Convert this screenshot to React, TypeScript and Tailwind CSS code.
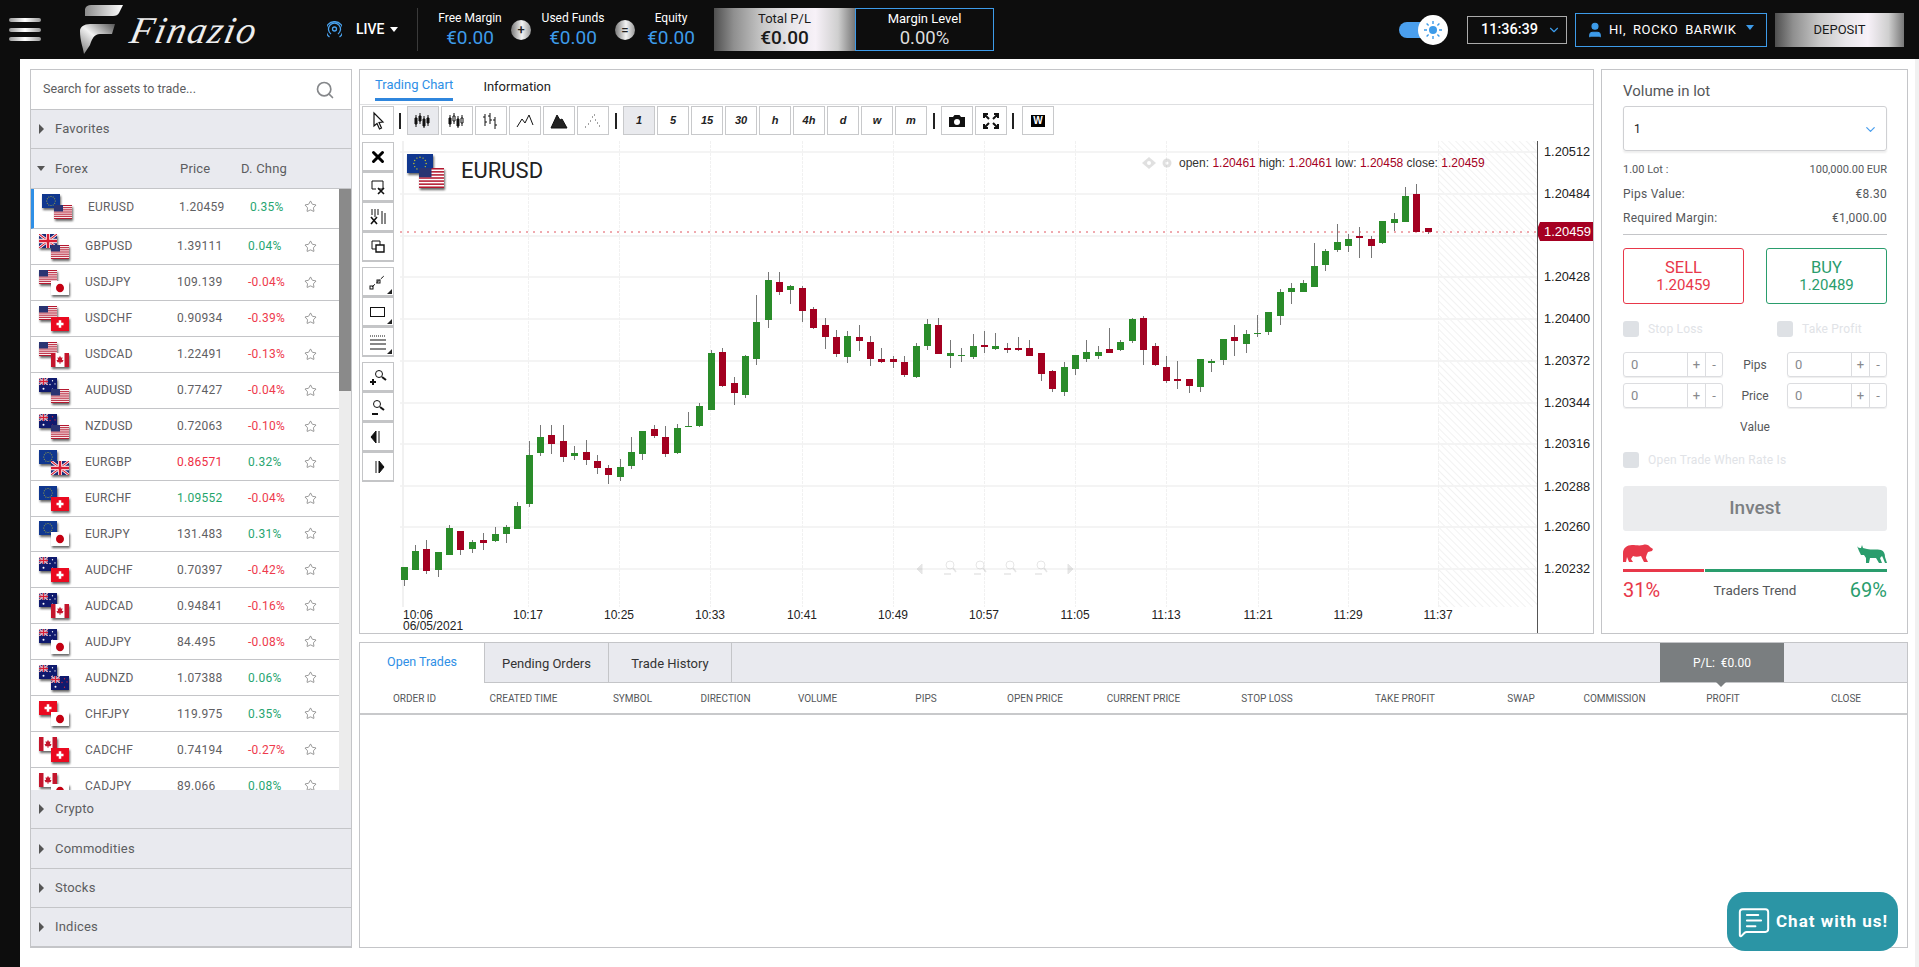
import { ChevronDown, MessageSquareText, Search, Star, User, X } from 'lucide-react'
import type { ReactNode } from 'react'

const metal =
  'bg-[linear-gradient(90deg,#4f4f4f_0%,#8f8f8f_14%,#c9c9c9_35%,#e8e6ea_55%,#f7f1f8_72%,#cfcfcf_88%,#777777_100%)]'

const pairs = [
  ['EUR', 'USD', '1.20459', '0.35%', ''],
  ['GBP', 'USD', '1.39111', '0.04%', ''],
  ['USD', 'JPY', '109.139', '-0.04%', ''],
  ['USD', 'CHF', '0.90934', '-0.39%', ''],
  ['USD', 'CAD', '1.22491', '-0.13%', ''],
  ['AUD', 'USD', '0.77427', '-0.04%', ''],
  ['NZD', 'USD', '0.72063', '-0.10%', ''],
  ['EUR', 'GBP', '0.86571', '0.32%', 'down'],
  ['EUR', 'CHF', '1.09552', '-0.04%', 'up'],
  ['EUR', 'JPY', '131.483', '0.31%', ''],
  ['AUD', 'CHF', '0.70397', '-0.42%', ''],
  ['AUD', 'CAD', '0.94841', '-0.16%', ''],
  ['AUD', 'JPY', '84.495', '-0.08%', ''],
  ['AUD', 'NZD', '1.07388', '0.06%', ''],
  ['CHF', 'JPY', '119.975', '0.35%', ''],
  ['CAD', 'CHF', '0.74194', '-0.27%', ''],
  ['CAD', 'JPY', '89.066', '0.08%', ''],
]

// bodyTop, bodyBottom, wickTop, wickBottom, 1 = green
const candles = [
  [567, 580, 567, 586, 1], [551, 570, 545, 570, 1], [549, 571, 540, 574, 0], [552, 570, 552, 577, 1],
  [528, 555, 525, 555, 1], [531, 550, 531, 555, 0], [542, 549, 540, 553, 1], [540, 543, 533, 550, 0],
  [534, 541, 527, 542, 1], [527, 534, 525, 543, 1], [506, 529, 502, 529, 1], [455, 504, 441, 507, 1],
  [437, 453, 425, 456, 1], [435, 444, 425, 454, 0], [441, 457, 425, 462, 0], [453, 456, 446, 460, 1],
  [452, 460, 440, 465, 0], [461, 468, 455, 474, 0], [468, 475, 465, 484, 0], [467, 477, 459, 481, 1],
  [452, 466, 437, 469, 1], [431, 454, 431, 460, 1], [429, 436, 425, 438, 0], [437, 454, 426, 457, 0],
  [428, 453, 424, 454, 1], [426, 427, 412, 427, 1], [406, 426, 403, 427, 1], [353, 410, 350, 410, 1],
  [352, 386, 348, 387, 0], [383, 393, 377, 405, 0], [356, 395, 355, 398, 1], [322, 359, 295, 365, 1],
  [280, 320, 272, 328, 1], [282, 292, 272, 295, 0], [286, 290, 285, 304, 1], [288, 311, 286, 322, 0],
  [309, 328, 307, 329, 0], [325, 337, 318, 349, 0], [337, 354, 330, 357, 0], [336, 357, 331, 363, 1],
  [337, 341, 325, 351, 0], [342, 359, 336, 366, 0], [359, 362, 348, 363, 0], [359, 362, 356, 368, 0],
  [362, 375, 356, 377, 0], [346, 377, 343, 378, 1], [324, 346, 319, 350, 1], [325, 354, 318, 354, 0],
  [353, 356, 340, 368, 1], [355, 356, 348, 362, 1], [346, 357, 334, 359, 1], [345, 347, 331, 353, 0],
  [346, 349, 333, 350, 1], [348, 350, 343, 353, 0], [348, 350, 337, 351, 0], [348, 356, 340, 356, 0],
  [353, 374, 353, 381, 0], [371, 389, 370, 392, 0], [367, 392, 362, 396, 1], [355, 369, 355, 375, 1],
  [352, 359, 340, 362, 1], [352, 356, 346, 359, 1], [349, 353, 328, 353, 0], [342, 350, 340, 351, 1],
  [319, 341, 318, 343, 1], [318, 350, 316, 365, 0], [346, 365, 343, 366, 0], [367, 381, 356, 383, 0],
  [379, 381, 361, 389, 0], [379, 386, 379, 393, 0], [359, 387, 359, 392, 1], [361, 363, 359, 372, 1],
  [339, 360, 339, 365, 1], [337, 341, 325, 356, 0], [334, 344, 330, 353, 1], [333, 334, 315, 337, 1],
  [312, 332, 312, 335, 1], [292, 316, 289, 325, 1], [288, 292, 283, 304, 1], [283, 292, 280, 292, 1],
  [266, 287, 243, 287, 1], [251, 265, 249, 271, 1], [242, 250, 224, 252, 1], [239, 246, 234, 252, 1],
  [236, 238, 227, 258, 0], [239, 246, 236, 258, 0], [221, 243, 221, 244, 1], [219, 223, 213, 231, 1],
  [196, 222, 187, 222, 1], [194, 232, 184, 232, 0], [228, 232, 228, 234, 0],
]

const gridY = [152, 194, 236, 277, 319, 361, 403, 444, 486, 527, 569]
const gridX = [528, 619, 710, 802, 893, 984, 1075, 1166, 1258, 1348, 1438]
const timeLabels = ['10:17', '10:25', '10:33', '10:41', '10:49', '10:57', '11:05', '11:13', '11:21', '11:29', '11:37']
const priceLabels = [
  ['1.20512', 156], ['1.20484', 198], ['1.20428', 281], ['1.20400', 323], ['1.20372', 365],
  ['1.20344', 407], ['1.20316', 448], ['1.20288', 491], ['1.20260', 531], ['1.20232', 573],
] as const

const columns = [
  'ORDER ID', 'CREATED TIME', 'SYMBOL', 'DIRECTION', 'VOLUME', 'PIPS', 'OPEN PRICE', 'CURRENT PRICE',
  'STOP LOSS', 'TAKE PROFIT', 'SWAP', 'COMMISSION', 'PROFIT', 'CLOSE',
]

function UnionJack({ x = 0, y = 0, w = 36, h = 26 }: { x?: number; y?: number; w?: number; h?: number }) {
  return (
    <svg x={x} y={y} width={w} height={h} viewBox="0 0 36 26" preserveAspectRatio="none">
      <rect width="36" height="26" fill="#1c2a78" />
      <path d="M0 0L36 26M36 0L0 26" stroke="#fff" strokeWidth="5" />
      <path d="M0 0L36 26M36 0L0 26" stroke="#d81e34" strokeWidth="2" />
      <path d="M18 0V26M0 13H36" stroke="#fff" strokeWidth="8" />
      <path d="M18 0V26M0 13H36" stroke="#d81e34" strokeWidth="5" />
    </svg>
  )
}

function FlagArt({ code }: { code: string }) {
  if (code === 'USD') {
    return (
      <>
        <rect width="36" height="26" fill="#fff" />
        {[0, 4, 8, 12, 16, 20, 24].map((y) => (
          <rect key={y} y={y} width="36" height="2" fill="#b4182f" />
        ))}
        <rect width="18" height="12" fill="#2a3472" />
      </>
    )
  }
  if (code === 'EUR') {
    return (
      <>
        <rect width="36" height="26" fill="#10378f" />
        {[0, 30, 60, 90, 120, 150, 180, 210, 240, 270, 300, 330].map((a) => (
          <circle
            key={a}
            cx={18 + 8.5 * Math.cos((a * Math.PI) / 180)}
            cy={13 + 8.5 * Math.sin((a * Math.PI) / 180)}
            r="1"
            fill="#c5c22a"
          />
        ))}
      </>
    )
  }
  if (code === 'GBP') return <UnionJack />
  if (code === 'JPY') {
    return (
      <>
        <rect width="36" height="26" fill="#fff" />
        <circle cx="18" cy="13" r="8" fill="#c40012" />
      </>
    )
  }
  if (code === 'CHF') {
    return (
      <>
        <rect width="36" height="26" fill="#ea0a20" />
        <path d="M18 6V20M11 13H25" stroke="#fff" strokeWidth="5" />
      </>
    )
  }
  if (code === 'CAD') {
    return (
      <>
        <rect width="36" height="26" fill="#fff" />
        <rect width="9" height="26" fill="#c4152c" />
        <rect x="27" width="9" height="26" fill="#c4152c" />
        <path d="M18 5L20 9L23 8L22 13L25 13L23 17L19 17V20H17V17L13 17L11 13L14 13L13 8L16 9Z" fill="#c4152c" />
      </>
    )
  }
  const star = code === 'NZD' ? '#d8243a' : '#fff'
  return (
    <>
      <rect width="36" height="26" fill="#0f1a6e" />
      <UnionJack w={18} h={13} />
      <circle cx="9" cy="20" r="2" fill="#fff" />
      <circle cx="27" cy="5" r="1.3" fill={star} />
      <circle cx="22" cy="12" r="1.3" fill={star} />
      <circle cx="32" cy="11" r="1.3" fill={star} />
      <circle cx="27" cy="21" r="1.3" fill={star} />
    </>
  )
}

function Flag({ code, className }: { code: string; className: string }) {
  return (
    <svg viewBox="0 0 36 26" preserveAspectRatio="none" className={`absolute drop-shadow-[1px_2px_1px_rgba(0,0,0,0.6)] ${className}`}>
      <FlagArt code={code} />
    </svg>
  )
}

function SectionHead({ label, open, children }: { label: string; open?: boolean; children?: ReactNode }) {
  return (
    <div className={`flex items-center border-b border-[#c4c5c8] bg-[#e9eaef] text-[13px] tracking-[0.2px] text-[#5c5d60] ${open ? 'h-[40px]' : 'h-[39px]'}`}>
      <div className="flex w-[24px] justify-end pr-[10px]">
        {open ? (
          <span className="h-0 w-0 border-x-[4px] border-t-[5px] border-x-transparent border-t-[#555]" />
        ) : (
          <span className="mr-[1px] h-0 w-0 border-y-[5px] border-l-[5px] border-y-transparent border-l-[#555]" />
        )}
      </div>
      <span className="w-[125px]">{label}</span>
      {children}
    </div>
  )
}

function PairRow({ row, first }: { row: string[]; first: boolean }) {
  const [base, quote, price, change, tick] = row
  const priceColor = tick === 'down' ? 'text-[#ee2f45]' : tick === 'up' ? 'text-[#1fa56c]' : 'text-[#5f6063]'
  const changeColor = change.startsWith('-') ? 'text-[#ee3a4c]' : 'text-[#27a571]'
  return (
    <div className={`flex shrink-0 items-center border-b border-[#c4c5c8] text-[12px] tracking-[0.25px] ${first ? 'h-[40px] border-l-[3px] border-l-[#2f8fe6] pb-[4px]' : 'h-[35.94px]'}`}>
      <div className="w-[54px] shrink-0 pl-[8px]">
        <div className="relative h-[25px] w-[30px]">
          <Flag code={base} className="left-0 top-0 h-[14px] w-[18px]" />
          <Flag code={quote} className="bottom-0 right-0 h-[14px] w-[18px]" />
        </div>
      </div>
      <span className={`shrink-0 text-[#5f6063] ${first ? 'w-[91px]' : 'w-[92px]'}`}>{base}{quote}</span>
      <span className={`w-[71px] shrink-0 ${priceColor}`}>{price}</span>
      <span className={`shrink-0 ${changeColor} ${first ? 'w-[54px]' : 'w-[56px]'}`}>{change}</span>
      <Star size={13} strokeWidth={1.1} className="text-[#555]" />
    </div>
  )
}

function MarketsPanel() {
  return (
    <section className="row-span-2 flex flex-col border border-[#c4c5c8] bg-white">
      <div className="flex h-[40px] items-center justify-between border-b border-[#c4c5c8] pl-[12px] pr-[16px] text-[12.5px] text-[#5c5d60]">
        <span>Search for assets to trade...</span>
        <Search size={20} strokeWidth={2} className="text-[#85878a]" />
      </div>
      <SectionHead label="Favorites" />
      <SectionHead label="Forex" open>
        <span className="w-[61px]">Price</span>
        <span>D. Chng</span>
      </SectionHead>
      <div className="relative h-[601px] overflow-hidden">
        <div className="flex w-[308px] flex-col">
          {pairs.map((row, i) => (
            <PairRow key={row[0] + row[1]} row={row} first={i === 0} />
          ))}
        </div>
        <div className="absolute inset-y-0 right-0 w-[12px] bg-[#ececec]">
          <div className="h-[202px] bg-[#8a8a8a]" />
        </div>
      </div>
      <SectionHead label="Crypto" />
      <div className="[&>div]:h-[40px]">
        <SectionHead label="Commodities" />
      </div>
      <SectionHead label="Stocks" />
      <SectionHead label="Indices" />
    </section>
  )
}

function ToolSvg({ children }: { children: ReactNode }) {
  return (
    <svg width="22" height="20" viewBox="0 0 22 20" fill="none" stroke="#111" strokeWidth="1">
      {children}
    </svg>
  )
}

const barIcon = (
  <ToolSvg>
    <path d="M4 4V16M8 2V13M12 5V17M16 4V15" />
    <path d="M3 7H5V13H3ZM7 5H9V10H7ZM11 8H13V15H11ZM15 7H17V12H15Z" fill="#111" />
  </ToolSvg>
)
const barHollowIcon = (
  <ToolSvg>
    <path d="M4 4V16M8 2V13M12 5V17M16 4V15" />
    <path d="M3 7H5V13H3ZM11 8H13V15H11Z" fill="#111" />
    <path d="M7 5H9V10H7ZM15 7H17V12H15Z" fill="#fff" />
  </ToolSvg>
)
const ohlcIcon = (
  <ToolSvg>
    <path d="M5 3V15M3 6H5M5 11H7M10 2V13M8 5H10M10 9H12M15 6V18M13 9H15M15 14H17" />
  </ToolSvg>
)
const lineIcon = (
  <ToolSvg>
    <path d="M3 16L8 8L11 12L15 4L19 14" />
  </ToolSvg>
)
const areaIcon = (
  <ToolSvg>
    <path d="M3 17L9 4L12 9L14 8L19 17Z" fill="#222" />
  </ToolSvg>
)
const dotsIcon = (
  <ToolSvg>
    <path d="M3 16h1M6 13h1M8 10h1M10 6h1M13 9h1M15 12h1M17 15h1M12 4h1" stroke="#444" />
  </ToolSvg>
)
const cursorIcon = (
  <svg width="18" height="20" viewBox="0 0 18 20" fill="#fff" stroke="#111" strokeWidth="1.2">
    <path d="M5 2L5 15L8 12.5L10.5 18L12.5 17L10 11.5L14 11Z" />
  </svg>
)
const cameraIcon = (
  <svg width="20" height="18" viewBox="0 0 20 18" fill="#111">
    <path d="M2 5H6L7.5 3H12.5L14 5H18V15H2Z" />
    <circle cx="10" cy="10" r="3" fill="#fff" />
  </svg>
)
const fullIcon = (
  <svg width="18" height="18" viewBox="0 0 18 18" fill="none" stroke="#111" strokeWidth="2">
    <path d="M2 6V2H6M12 2H16V6M16 12V16H12M6 16H2V12M3 3L7 7M15 3L11 7M15 15L11 11M3 15L7 11" />
  </svg>
)

function ToolBtn({ children, active, className = '' }: { children: ReactNode; active?: boolean; className?: string }) {
  return (
    <div className={`flex h-[29px] w-[32px] shrink-0 items-center justify-center border border-[#c8c9cb] ${active ? 'bg-[#e9eaee]' : 'bg-white'} ${className}`}>
      {children}
    </div>
  )
}

function TimeBtn({ label, active }: { label: string; active?: boolean }) {
  return (
    <ToolBtn active={active}>
      <span className="font-['Liberation_Sans',sans-serif] text-[11px] font-bold italic text-[#222]">{label}</span>
    </ToolBtn>
  )
}

function Sep({ className }: { className: string }) {
  return <span className={`h-[16px] w-[2px] shrink-0 bg-[#222] ${className}`} />
}

function TopToolbar() {
  return (
    <div className="mt-[1px] flex h-[29px] items-center gap-[2px] pl-[2px]">
      <ToolBtn>{cursorIcon}</ToolBtn>
      <Sep className="ml-[3px] mr-[4px]" />
      <ToolBtn active>{barIcon}</ToolBtn>
      <ToolBtn>{barHollowIcon}</ToolBtn>
      <ToolBtn>{ohlcIcon}</ToolBtn>
      <ToolBtn>{lineIcon}</ToolBtn>
      <ToolBtn>{areaIcon}</ToolBtn>
      <ToolBtn>{dotsIcon}</ToolBtn>
      <Sep className="mx-[4px]" />
      <TimeBtn label="1" active />
      {['5', '15', '30', 'h', '4h', 'd', 'w', 'm'].map((t) => (
        <TimeBtn key={t} label={t} />
      ))}
      <Sep className="mx-[4px]" />
      <ToolBtn>{cameraIcon}</ToolBtn>
      <ToolBtn>{fullIcon}</ToolBtn>
      <Sep className="ml-[3px] mr-[6px]" />
      <ToolBtn>
        <span className="bg-black px-[2px] font-['Liberation_Sans',sans-serif] text-[10px] font-bold leading-[12px] text-white">W</span>
      </ToolBtn>
    </div>
  )
}

function SideBtn({ children, corner }: { children: ReactNode; corner?: boolean }) {
  return (
    <div className="relative flex h-[30px] w-[32px] items-center justify-center border border-b-2 border-[#c4c5c7] bg-white">
      {children}
      {corner && (
        <span className="absolute bottom-[1px] right-[1px] h-0 w-0 border-b-[5px] border-l-[5px] border-b-[#222] border-l-transparent" />
      )}
    </div>
  )
}

function SideToolbar() {
  return (
    <div className="flex w-[40px] shrink-0 flex-col pl-[2px] pt-[1px]">
      <SideBtn>
        <X size={18} strokeWidth={4} className="text-black" />
      </SideBtn>
      <SideBtn>
        <ToolSvg>
          <path d="M5 4H16V12H11M5 4V12H9" />
          <path d="M11 11L17 17M17 11L11 17" strokeWidth="1.6" />
        </ToolSvg>
      </SideBtn>
      <SideBtn>
        <ToolSvg>
          <path d="M5 2V8M8 2V10M11 2V8M15 4V17M18 6V17" />
          <path d="M4 10L10 17M10 10L4 17" strokeWidth="1.6" />
        </ToolSvg>
      </SideBtn>
      <SideBtn>
        <ToolSvg>
          <path d="M5 4H13V8M5 4V12H9" />
          <path d="M9 8H17V15H9Z" strokeWidth="1.4" />
        </ToolSvg>
      </SideBtn>
      <div className="h-[5px]" />
      <SideBtn corner>
        <ToolSvg>
          <path d="M5 15L18 3" strokeDasharray="4 2" />
          <rect x="3" y="14" width="3" height="3" />
          <rect x="10" y="8" width="3" height="3" />
        </ToolSvg>
      </SideBtn>
      <SideBtn corner>
        <ToolSvg>
          <rect x="3.5" y="5.5" width="14" height="9" />
        </ToolSvg>
      </SideBtn>
      <SideBtn corner>
        <ToolSvg>
          <path d="M3 4H19" strokeDasharray="1 1" />
          <path d="M3 8H19M3 12H19M3 17H19" />
        </ToolSvg>
      </SideBtn>
      <div className="h-[5px]" />
      <SideBtn>
        <ToolSvg>
          <circle cx="12" cy="7" r="3.5" />
          <path d="M15 10L19 13" strokeWidth="2" />
          <path d="M6 12V18M3 15H9" strokeWidth="2" />
        </ToolSvg>
      </SideBtn>
      <SideBtn>
        <ToolSvg>
          <circle cx="10" cy="7" r="3.5" />
          <path d="M13 10L17 13" strokeWidth="2" />
          <path d="M5 17H11" strokeWidth="2" />
        </ToolSvg>
      </SideBtn>
      <SideBtn>
        <ToolSvg>
          <path d="M9 4V16L4 10Z" fill="#111" />
          <path d="M12 4V16" />
        </ToolSvg>
      </SideBtn>
      <SideBtn>
        <ToolSvg>
          <path d="M12 4V16L17 10Z" fill="#111" />
          <path d="M9 4V16" />
        </ToolSvg>
      </SideBtn>
    </div>
  )
}

function ChartCanvas() {
  const red = '#a50022'
  return (
    <svg viewBox="400 141 1193 492" className="h-[492px] w-[1193px] shrink-0 font-['Liberation_Sans',sans-serif]">
      <defs>
        <pattern id="hatch" width="5" height="5" patternUnits="userSpaceOnUse" patternTransform="rotate(135)">
          <rect width="5" height="5" fill="#fff" />
          <line x1="0" y1="0" x2="0" y2="5" stroke="#eeeeee" strokeWidth="1.5" />
        </pattern>
      </defs>
      <rect x="1438" y="141" width="99" height="466" fill="url(#hatch)" />
      {gridY.map((y) => (
        <line key={y} x1="400" x2="1537" y1={y} y2={y} stroke="#f4f4f4" strokeWidth="2" />
      ))}
      <line x1="403" x2="403" y1="141" y2="607" stroke="#f1f1f1" strokeWidth="2" />
      {gridX.map((x) => (
        <line key={x} x1={x + 0.5} x2={x + 0.5} y1="141" y2="607" stroke="#f1f1f1" strokeDasharray="3 1" />
      ))}
      <g opacity="0.18" fill="#777" stroke="#777">
        <path d="M922 564V574L917 569Z" />
        <path d="M1068 564V574L1073 569Z" />
        {[950, 980, 1010, 1041].map((x) => (
          <g key={x} fill="none">
            <circle cx={x} cy="565" r="4" />
            <path d={`M${x + 3} 568L${x + 6} 572M${x - 6} 574H${x + 1}`} strokeWidth="1.5" />
          </g>
        ))}
      </g>
      <line x1="400" x2="1537" y1="232" y2="232" stroke="#e0545f" strokeDasharray="2 5" />
      {candles.map((c, i) => {
        const x = Math.round(403.5 + i * 11.38)
        const fill = c[4] ? '#2a8c2a' : '#a30020'
        return (
          <g key={i}>
            <line x1={x + 0.5} x2={x + 0.5} y1={c[2]} y2={c[3]} stroke="#777" />
            <rect x={x - 3} y={c[0]} width="7" height={Math.max(c[1] - c[0], 1)} fill={fill} />
          </g>
        )
      })}
      <line x1="1537.5" x2="1537.5" y1="141" y2="633" stroke="#555" />
      {priceLabels.map(([label, y]) => (
        <text key={label} x="1544" y={y} fontSize="12.75" fill="#222">{label}</text>
      ))}
      <path d="M1538 227L1540 222H1593V241H1540L1538 236Z" fill={red} />
      <text x="1544" y="236" fontSize="13" fill="#fff">1.20459</text>
      <text x="403" y="619" fontSize="12" fill="#222">10:06</text>
      <text x="403" y="630" fontSize="12" fill="#222">06/05/2021</text>
      {gridX.map((x, i) => (
        <text key={x} x={x} y="619" fontSize="12" textAnchor="middle" fill="#222">{timeLabels[i]}</text>
      ))}
      <g opacity="0.25" fill="#888">
        <path d="M1142 163L1149 157L1156 163L1149 169Z" />
        <circle cx="1149" cy="163" r="2" fill="#fff" />
        <circle cx="1167" cy="163" r="4.5" />
        <circle cx="1167" cy="163" r="1.5" fill="#fff" />
      </g>
      <text x="1179" y="167" fontSize="12" fill="#333">
        open: <tspan fill={red}>1.20461</tspan> high: <tspan fill={red}>1.20461</tspan> low: <tspan fill={red}>1.20458</tspan> close: <tspan fill={red}>1.20459</tspan>
      </text>
    </svg>
  )
}

function ChartPanel() {
  return (
    <section className="flex flex-col overflow-hidden border border-[#c4c5c8] bg-white">
      <div className="flex h-[35px] shrink-0 items-start gap-[30px] border-b border-[#dedfe1] pl-[15px] text-[13px]">
        <span className="flex h-[31px] items-center border-b-[3px] border-[#2f86dd] pt-[2px] text-[#2f8fe6]">Trading Chart</span>
        <span className="flex h-[31px] items-center pt-[2px] text-[#222]">Information</span>
      </div>
      <TopToolbar />
      <div className="relative mt-[6px] flex flex-1">
        <SideToolbar />
        <ChartCanvas />
        <div className="absolute left-[47px] top-[13px] flex items-center">
          <div className="relative h-[34px] w-[37px]">
            <Flag code="EUR" className="left-0 top-0 h-[19px] w-[26px]" />
            <Flag code="USD" className="bottom-0 right-0 h-[20px] w-[25px]" />
          </div>
          <span className="ml-[17px] text-[22px] leading-none text-[#222]">EURUSD</span>
        </div>
      </div>
    </section>
  )
}

function StepInput() {
  return (
    <div className="flex h-[25px] rounded-[3px] border border-[#dcdde0] text-[13px] text-[#888a8d] shadow-[0_1px_1px_#eee]">
      <span className="flex w-[63px] items-center pl-[7px]">0</span>
      <span className="flex w-[18px] items-center justify-center border-l border-[#dcdde0]">+</span>
      <span className="flex flex-1 items-center justify-center border-l border-[#dcdde0]">-</span>
    </div>
  )
}

function Check({ label, className = '' }: { label: string; className?: string }) {
  return (
    <div className={`flex h-[16px] items-center ${className}`}>
      <span className="h-[16px] w-[16px] rounded-[3px] bg-[#dee1e5]" />
      <span className="ml-[9px] text-[12px] tracking-[0.2px] text-[#e1e3e7]">{label}</span>
    </div>
  )
}

function InfoRow({ left, right, small }: { left: string; right: string; small?: boolean }) {
  return (
    <div className={`flex h-[24px] items-center justify-between text-[#55575a] ${small ? 'text-[11px]' : 'text-[12px] tracking-[0.25px]'}`}>
      <span>{left}</span>
      <span>{right}</span>
    </div>
  )
}

function OrderPanel() {
  return (
    <section className="border border-[#c4c5c8] bg-white pl-[21px] pr-[20px] pt-[11px]">
      <div className="h-[20px] text-[15px] leading-[20px] text-[#55575a]">Volume in lot</div>
      <div className="mt-[5px] flex h-[45px] items-center justify-between rounded-[3px] border border-[#cfd0d3] pl-[10px] pr-[8px] text-[12px] text-[#222] shadow-[0_2px_2px_#eee]">
        <span>1</span>
        <ChevronDown size={15} strokeWidth={2} className="mt-[2px] text-[#4a9fee]" />
      </div>
      <div className="mt-[7px]">
        <InfoRow left="1.00 Lot :" right="100,000.00 EUR" small />
        <InfoRow left="Pips Value:" right="€8.30" />
        <InfoRow left="Required Margin:" right="€1,000.00" />
      </div>
      <div className="mt-[4px] border-t border-[#c4c5c8]" />
      <div className="mt-[13px] flex justify-between">
        <div className="flex h-[56px] w-[121px] flex-col items-center justify-center rounded-[3px] border border-[#e8384a] text-[#e8384a]">
          <span className="text-[16.5px] leading-[19px]">SELL</span>
          <span className="text-[15px] leading-[17px]">1.20459</span>
        </div>
        <div className="flex h-[56px] w-[121px] flex-col items-center justify-center rounded-[3px] border border-[#2a9d6d] text-[#2a9d6d]">
          <span className="text-[16.5px] leading-[19px]">BUY</span>
          <span className="text-[15px] leading-[17px]">1.20489</span>
        </div>
      </div>
      <div className="mt-[17px] flex">
        <Check label="Stop Loss" className="w-[154px]" />
        <Check label="Take Profit" />
      </div>
      <div className="mt-[15px] grid grid-cols-[100px_64px_100px] items-center gap-y-[6px] text-center text-[12px] text-[#55575a]">
        <StepInput />
        <span>Pips</span>
        <StepInput />
        <StepInput />
        <span>Price</span>
        <StepInput />
      </div>
      <div className="mt-[11px] h-[16px] text-center text-[12px] leading-[16px] text-[#55575a]">Value</div>
      <Check label="Open Trade When Rate Is" className="mt-[17px]" />
      <div className="mt-[18px] flex h-[45px] items-center justify-center rounded-[3px] bg-[#ebecee] text-[19px] font-medium text-[#7c7f82]">
        Invest
      </div>
      <div className="mt-[13px] flex h-[19px] items-start justify-between">
        <svg width="30" height="18" viewBox="0 0 30 18" fill="#e8384a">
          <path d="M0 18V9C0 4 4 1 9 1C13 1 16 2 20 1C23 0 26 1 27 3L30 5L29 7L25 8C24 10 23 12 23 14L25 18H21L18 12C15 13 12 13 10 12L8 15L10 18H6L4 13L3 18Z" />
        </svg>
        <svg width="30" height="19" viewBox="0 0 30 19" fill="#2a9d6d">
          <path d="M0 2C1 4 3 4 4 4L5 1L6 4L10 5C14 6 20 5 24 6C27 7 28 10 28 13L30 19H28L26 14L25 12L23 14L25 19H22L19 14H13L12 19H9L9 14L7 11L4 11L2 7Z" />
        </svg>
      </div>
      <div className="mt-[6px] flex h-[3px] gap-[1px]">
        <div className="w-[81px] bg-[#e8384a]" />
        <div className="flex-1 bg-[#2a9d6d]" />
      </div>
      <div className="mt-[8px] flex h-[20px] items-center justify-between">
        <span className="text-[20px] text-[#e8384a]">31%</span>
        <span className="text-[13.5px] text-[#55575a]">Traders Trend</span>
        <span className="text-[20px] text-[#2a9d6d]">69%</span>
      </div>
    </section>
  )
}

function TradesPanel() {
  return (
    <section className="col-span-2 flex flex-col border border-[#c4c5c8] bg-white">
      <div className="flex h-[40px] shrink-0 border-b border-[#c4c5c8] bg-[#e9eaef] text-[13px] text-[#333]">
        <div className="-mb-[1px] flex w-[125px] justify-center border-r border-[#c4c5c8] bg-white pt-[10px] text-[12.5px] text-[#2f8fe6]">Open Trades</div>
        <div className="flex w-[124px] items-center justify-center border-r border-[#c4c5c8] pt-[2px]">Pending Orders</div>
        <div className="flex w-[123px] items-center justify-center border-r border-[#c4c5c8] pt-[2px]">Trade History</div>
        <div className="relative ml-auto mr-[123px] flex w-[124px] items-center justify-center bg-[#7a7e80] text-[12px] text-white">
          P/L:&nbsp; €0.00
          <span className="absolute -bottom-[5px] left-[56px] h-0 w-0 border-x-[5px] border-t-[5px] border-x-transparent border-t-[#7a7e80]" />
        </div>
      </div>
      <div className="grid h-[32px] shrink-0 grid-cols-[109px_109px_109px_77px_107px_110px_108px_109px_138px_138px_94px_93px_124px_1fr] border-b-2 border-[#c8c9cb] text-[10px] text-[#55575a]">
        {columns.map((c) => (
          <span key={c} className="flex items-center justify-center">{c}</span>
        ))}
      </div>
    </section>
  )
}

function Stat({ label, className }: { label: string; className: string }) {
  return (
    <div className={`flex shrink-0 flex-col items-center ${className}`}>
      <span className="text-[12px] leading-[16px]">{label}</span>
      <span className="text-[19px] leading-[24px] text-[#3d9be9]">€0.00</span>
    </div>
  )
}

function MetalDot({ label }: { label: string }) {
  return (
    <span className="flex h-[20px] w-[20px] shrink-0 items-center justify-center rounded-full bg-[linear-gradient(90deg,#777,#f4f4f4_55%,#999)] text-[13px] font-medium leading-none text-[#222]">
      {label}
    </span>
  )
}

function Header() {
  return (
    <header className="flex h-[59px] shrink-0 items-center bg-[#0d0d0d] text-white">
      <div className="ml-[9px] flex h-[23px] w-[32px] shrink-0 flex-col justify-between">
        <span className="h-[4px] rounded-sm bg-[linear-gradient(90deg,#999,#fff_50%,#999)]" />
        <span className="h-[4px] rounded-sm bg-[linear-gradient(90deg,#999,#fff_50%,#999)]" />
        <span className="h-[4px] rounded-sm bg-[linear-gradient(90deg,#999,#fff_50%,#999)]" />
      </div>
      <svg width="45" height="50" viewBox="0 0 45 50" className="ml-[39px] shrink-0">
        <defs>
          <linearGradient id="logoA" x1="0" y1="0" x2="1" y2="0">
            <stop offset="0" stopColor="#8c8c8c" />
            <stop offset="1" stopColor="#ffffff" />
          </linearGradient>
          <linearGradient id="logoB" x1="0" y1="1" x2="1" y2="0">
            <stop offset="0" stopColor="#777777" />
            <stop offset="0.5" stopColor="#f2f2f2" />
            <stop offset="1" stopColor="#555555" />
          </linearGradient>
        </defs>
        <path d="M5 4C6 1 8 0 11 0H43L39 8C38 10 36 11 33 11H5Z" fill="url(#logoA)" />
        <path d="M0 26C0 22 4 19 10 19H35L32 29H20C14 29 12 34 10 40L4 49C3 42 0 36 0 26Z" fill="url(#logoB)" />
      </svg>
      <span className="ml-[6px] w-[125px] shrink-0 -skew-x-12 font-['Liberation_Serif',serif] text-[38px] italic leading-none tracking-[1.5px] text-[#eee]">
        Finazio
      </span>
      <svg width="15" height="18" viewBox="0 0 15 18" fill="none" stroke="#4aa3f0" strokeWidth="1.3" className="ml-[71px] shrink-0">
        <circle cx="7.5" cy="8" r="2" />
        <path d="M4 13A6 6 0 1 1 11 13M2.5 16A8.5 8.5 0 1 1 12.5 16" />
      </svg>
      <span className="ml-[14px] w-[28px] shrink-0 text-[14px] font-medium">LIVE</span>
      <span className="ml-[6px] h-0 w-0 shrink-0 border-x-[4px] border-t-[5px] border-x-transparent border-t-white" />
      <span className="ml-[19px] h-[43px] w-px shrink-0 bg-[#3a3a3a]" />
      <Stat label="Free Margin" className="ml-[12px] w-[80px]" />
      <span className="ml-px"><MetalDot label="+" /></span>
      <Stat label="Used Funds" className="ml-[2px] w-[80px]" />
      <span className="ml-[2px]"><MetalDot label="=" /></span>
      <Stat label="Equity" className="ml-px w-[70px]" />
      <div className={`ml-[8px] flex h-[43px] w-[141px] shrink-0 flex-col items-center justify-center text-[#1a1a1a] ${metal}`}>
        <span className="text-[13px] leading-[17px]">Total P/L</span>
        <span className="text-[19px] font-medium leading-[22px]">€0.00</span>
      </div>
      <div className="flex h-[43px] w-[139px] shrink-0 flex-col items-center justify-center border-[1.5px] border-[#3d9be9]">
        <span className="text-[13px] leading-[17px]">Margin Level</span>
        <span className="text-[18.5px] leading-[22px] text-[#ddd]">0.00%</span>
      </div>
      <div className="relative ml-[405px] h-[30px] w-[49px] shrink-0">
        <span className="absolute left-0 top-[7px] h-[16px] w-[30px] rounded-full bg-[#4a9fee]" />
        <span className="absolute right-0 top-0 flex h-[30px] w-[30px] items-center justify-center rounded-full bg-white">
          <svg width="20" height="20" viewBox="0 0 20 20" stroke="#3d9be9" strokeWidth="1.4" fill="#3d9be9">
            <circle cx="10" cy="10" r="4" stroke="none" />
            <path d="M10 1V4M10 16V19M1 10H4M16 10H19M3.6 3.6L5.6 5.6M14.4 14.4L16.4 16.4M16.4 3.6L14.4 5.6M5.6 14.4L3.6 16.4" />
          </svg>
        </span>
      </div>
      <div className="ml-[19px] flex h-[28px] w-[100px] shrink-0 items-center border border-[#aaa] pl-[13px] text-[14.5px] font-medium">
        11:36:39
        <ChevronDown size={14} strokeWidth={2} className="ml-[9px] text-[#3d9be9]" />
      </div>
      <div className="ml-[8px] flex h-[34px] w-[192px] shrink-0 items-center border border-[#3d9be9] pl-[10px] text-[13px] tracking-[0.6px] [word-spacing:3px]">
        <User size={18} fill="#3d9be9" strokeWidth={1.5} className="text-[#3d9be9]" />
        <span className="ml-[5px] whitespace-pre">HI, ROCKO BARWIK</span>
        <span className="mb-[4px] ml-[9px] h-0 w-0 border-x-[4px] border-t-[5px] border-x-transparent border-t-[#3d9be9]" />
      </div>
      <div className={`ml-[8px] flex h-[34px] w-[129px] shrink-0 items-center justify-center text-[13px] text-[#1a1a1a] ${metal}`}>
        DEPOSIT
      </div>
    </header>
  )
}

export default function App() {
  return (
    <div className="relative flex h-[967px] w-[1919px] flex-col overflow-hidden bg-white font-['Roboto',sans-serif]">
      <Header />
      <div className="flex flex-1">
        <div className="w-[20px] shrink-0 bg-[#0d0d0d]" />
        <main className="grid flex-1 grid-cols-[322px_1235px_307px] grid-rows-[565px_306px] content-start gap-x-[7px] gap-y-[8px] pl-[10px] pt-[10px]">
          <MarketsPanel />
          <ChartPanel />
          <OrderPanel />
          <TradesPanel />
        </main>
        <div className="w-[4px] shrink-0 bg-[#f1f1f1]" />
      </div>
      <div className="absolute bottom-[16px] right-[21px] flex h-[59px] w-[171px] items-center justify-start gap-[5px] rounded-[18px] bg-[#2b95a5] pl-[10px] text-[17px] font-bold tracking-[1px] text-white">
        <MessageSquareText size={34} strokeWidth={1.4} />
        <span>Chat with us!</span>
      </div>
    </div>
  )
}
